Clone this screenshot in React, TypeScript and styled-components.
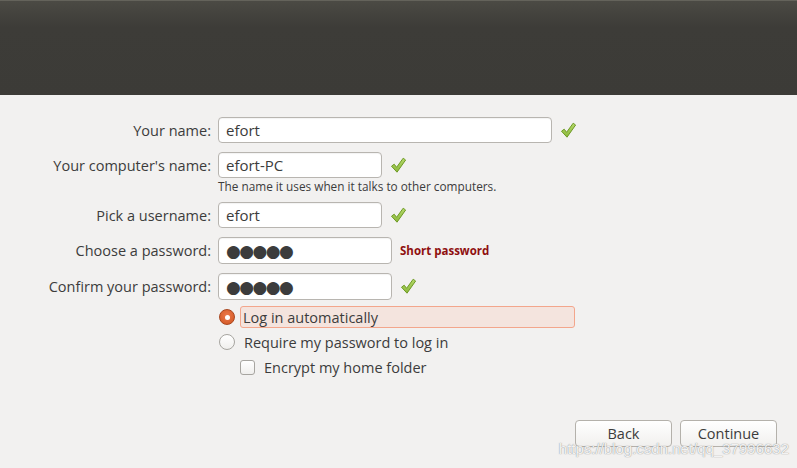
import React from "react";
import styled, { createGlobalStyle } from "styled-components";

const Global = createGlobalStyle`
  html, body { margin: 0; padding: 0; }
  body {
    background: #f2f1f0;
    font-family: "Open Sans", "Noto Sans", sans-serif;
    color: #3c3c3c;
  }
`;

const Page = styled.div`
  position: relative;
  height: 468px;
  display: flex;
  flex-direction: column;
  overflow: hidden;
`;

const Header = styled.div`
  height: 95px;
  flex: none;
  border-top: 1px solid #64635b;
  box-sizing: border-box;
  background: linear-gradient(to bottom, #4b4a44 0px, #3d3c38 26px, #3c3b37 95px);
`;

const Form = styled.div`
  display: flex;
  flex-direction: column;
  gap: 9px;
  padding-top: 22px;
`;

const Row = styled.div<{ h?: number }>`
  display: grid;
  grid-template-columns: 211px auto auto;
  column-gap: 7px;
  align-items: center;
  justify-content: start;
  height: ${(p) => p.h ?? 26}px;
`;

const Label = styled.label`
  text-align: right;
  font-size: 14.5px;
  white-space: nowrap;
`;

const Input = styled.div<{ w: number }>`
  box-sizing: border-box;
  width: ${(p) => p.w}px;
  height: 100%;
  background: #ffffff;
  border: 1px solid #b8b5b0;
  border-radius: 4px;
  box-shadow: inset 0 1px 1px rgba(0, 0, 0, 0.05);
  display: flex;
  align-items: center;
  padding-left: 7px;
  font-size: 15px;
  color: #3c3c3c;
`;

const Dots = styled.span`
  font-family: "DejaVu Sans", sans-serif;
  font-size: 17px;
  letter-spacing: -1.6px;
  color: #3c3c3c;
`;

const Side = styled.div`
  display: flex;
  align-items: center;
  padding-left: 1px;
`;

const Warning = styled.span`
  font-size: 11.5px;
  font-weight: 700;
  color: #8f0f0f;
`;

const Group = styled.div`
  display: flex;
  flex-direction: column;
  gap: 1px;
`;

const Hint = styled.div`
  padding-left: 218px;
  font-size: 11.8px;
  line-height: 14px;
  color: #3c3c3c;
`;

const Options = styled.div`
  display: flex;
  flex-direction: column;
  gap: 3px;
  padding-left: 219px;
  margin-top: -3px;
`;

const Option = styled.div<{ indent?: boolean }>`
  display: flex;
  align-items: center;
  gap: 5px;
  height: 22px;
  padding-left: ${(p) => (p.indent ? "21px" : "0")};
`;

const OptionText = styled.span<{ focus?: boolean }>`
  box-sizing: border-box;
  font-size: 14.5px;
  height: 22px;
  display: flex;
  align-items: center;
  padding: 0 2px;
  margin-left: ${(p) => (p.focus ? "0" : "1px")};
  width: ${(p) => (p.focus ? "335px" : "auto")};
  border: 1px solid ${(p) => (p.focus ? "#f3a68c" : "transparent")};
  border-radius: 3px;
  background: ${(p) => (p.focus ? "#f4e4de" : "transparent")};
`;

const Radio = styled.span<{ on?: boolean }>`
  box-sizing: border-box;
  width: 16px;
  height: 16px;
  border-radius: 50%;
  flex: none;
  display: flex;
  align-items: center;
  justify-content: center;
  border: 1px solid ${(p) => (p.on ? "#a9461e" : "#a7a5a0")};
  background: ${(p) =>
    p.on
      ? "radial-gradient(circle at 50% 40%, #ec7a4c, #d0541f)"
      : "linear-gradient(#ffffff, #f0efed)"};
  &::after {
    content: "";
    width: 5px;
    height: 5px;
    border-radius: 50%;
    background: #ffffff;
    display: ${(p) => (p.on ? "block" : "none")};
  }
`;

const Checkbox = styled.span`
  box-sizing: border-box;
  width: 15px;
  height: 15px;
  flex: none;
  border: 1px solid #a7a5a0;
  border-radius: 3px;
  background: linear-gradient(#ffffff, #f0efed);
`;

const Footer = styled.div`
  margin-top: auto;
  display: flex;
  justify-content: flex-end;
  gap: 8px;
  padding: 0 20px 21px 0;
`;

const Button = styled.button`
  box-sizing: border-box;
  width: 97px;
  height: 27px;
  font-family: inherit;
  font-size: 14.5px;
  color: #3c3c3c;
  border: 1px solid #b4b1ab;
  border-radius: 4px;
  background: linear-gradient(#ffffff, #f1f0ee);
  padding: 0;
`;

const Watermark = styled.div`
  position: absolute;
  right: 8px;
  bottom: 11px;
  font-family: "Liberation Sans", sans-serif;
  font-size: 15px;
  color: rgba(255, 255, 255, 0.9);
  text-shadow: 0 0 1px rgba(120, 120, 120, 0.7), 0 0 1px rgba(120, 120, 120, 0.5);
  pointer-events: none;
  white-space: nowrap;
`;

const Check = () => (
  <svg width="17" height="17" viewBox="0 0 17 17">
    <defs>
      <linearGradient id="ck" x1="0" y1="0" x2="0" y2="1">
        <stop offset="0" stopColor="#b5d96a" />
        <stop offset="1" stopColor="#8bb83a" />
      </linearGradient>
    </defs>
    <path
      d="M1.5 9.2 L4.2 7.2 L6.6 10.3 L13.2 1.2 L15.6 3 L7 15.2 Z"
      fill="url(#ck)"
      stroke="#6e9a25"
      strokeWidth="1"
      strokeLinejoin="round"
    />
  </svg>
);

export default function App() {
  return (
    <Page>
      <Global />
      <Header />
      <Form>
        <Row>
          <Label>Your name:</Label>
          <Input w={334}>efort</Input>
          <Side>
            <Check />
          </Side>
        </Row>
        <Group>
          <Row>
            <Label>Your computer's name:</Label>
            <Input w={164}>efort-PC</Input>
            <Side>
              <Check />
            </Side>
          </Row>
          <Hint>The name it uses when it talks to other computers.</Hint>
        </Group>
        <Row>
          <Label>Pick a username:</Label>
          <Input w={164}>efort</Input>
          <Side>
            <Check />
          </Side>
        </Row>
        <Row h={27}>
          <Label>Choose a password:</Label>
          <Input w={174}>
            <Dots>●●●●●</Dots>
          </Input>
          <Side>
            <Warning>Short password</Warning>
          </Side>
        </Row>
        <Row h={27}>
          <Label>Confirm your password:</Label>
          <Input w={174}>
            <Dots>●●●●●</Dots>
          </Input>
          <Side>
            <Check />
          </Side>
        </Row>
        <Options>
          <Option>
            <Radio on />
            <OptionText focus>Log in automatically</OptionText>
          </Option>
          <Option>
            <Radio />
            <OptionText>Require my password to log in</OptionText>
          </Option>
          <Option indent>
            <Checkbox />
            <OptionText>Encrypt my home folder</OptionText>
          </Option>
        </Options>
      </Form>
      <Footer>
        <Button>Back</Button>
        <Button>Continue</Button>
      </Footer>
      <Watermark>https://blog.csdn.net/qq_37996632</Watermark>
    </Page>
  );
}
